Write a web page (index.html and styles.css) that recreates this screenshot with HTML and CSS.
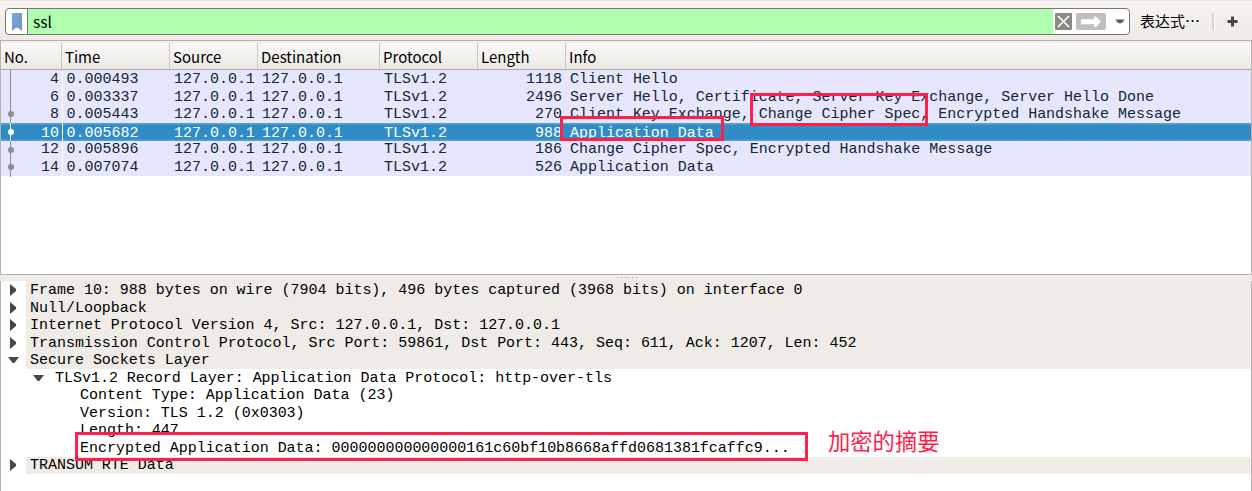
FILE: index.html
```html
<!DOCTYPE html>
<html lang="zh-CN">
<head>
<meta charset="utf-8">
<title>ssl</title>
<link rel="stylesheet" href="styles.css">
</head>
<body>
<div class="toolbar">
  <div class="filter">
    <span class="bookmark"><svg width="12" height="20" viewBox="0 0 12 20"><defs><linearGradient id="b" x2="1" y2="1"><stop stop-color="#7ca5d7"/><stop offset="1" stop-color="#6d96c9"/></linearGradient></defs><path d="M1 1h10v17H9q-.5-2.500-3-2.500T3 18H1z" fill="url(#b)"/></svg></span>
    <span class="query">ssl</span>
    <svg class="clear" width="17" height="17" viewBox="0 0 17 17"><rect width="17" height="17" rx="1" fill="#888a85"/><path d="M3 3l11 11M14 3L3 14" stroke="#fff" stroke-width="1.700"/></svg>
    <svg class="apply" width="30" height="17" viewBox="0 0 30 17"><rect width="30" height="17" rx="2" fill="#c1bebb"/><path d="M5 6.200H18V3.500h2l5 5.200-5 5.200h-2v-2.700H5z" fill="#fff"/></svg>
    <svg class="drop" width="10" height="5" viewBox="0 0 10 5"><path d="M.5.5h9v.6L6.500 4.200h-3L.5 1.100z" fill="#5b5b58"/></svg>
  </div>
  <span class="expr">表达式…</span>
  <span class="divider"></span>
  <svg class="plus" width="11" height="11" viewBox="0 0 11 11"><path d="M4 .5h3V4h3.500v3H7v3.500H4V7H.5V4H4z" fill="#464744"/></svg>
</div>
<div class="packets">
  <div class="cols head"><span>No.</span><span>Time</span><span>Source</span><span>Destination</span><span>Protocol</span><span>Length</span><span>Info</span></div>
  <div class="cols row"><span class="num"><i class="line"></i>4</span><span>0.000493</span><span>127.0.0.1</span><span>127.0.0.1</span><span>TLSv1.2</span><span class="num">1118</span><span>Client Hello</span></div>
  <div class="cols row short"><span class="num"><i class="line"></i>6</span><span>0.003337</span><span>127.0.0.1</span><span>127.0.0.1</span><span>TLSv1.2</span><span class="num">2496</span><span>Server Hello, Certificate, Server Key Exchange, Server Hello Done</span></div>
  <div class="cols row"><span class="num"><i class="line dot"></i>8</span><span>0.005443</span><span>127.0.0.1</span><span>127.0.0.1</span><span>TLSv1.2</span><span class="num">270</span><span>Client Key Exchange, Change Cipher Spec, Encrypted Handshake Message</span></div>
  <div class="cols row selected"><span class="num"><i class="line dot"></i>10</span><span>0.005682</span><span>127.0.0.1</span><span>127.0.0.1</span><span>TLSv1.2</span><span class="num">988</span><span>Application Data</span></div>
  <div class="cols row short raised"><span class="num"><i class="line dot"></i>12</span><span>0.005896</span><span>127.0.0.1</span><span>127.0.0.1</span><span>TLSv1.2</span><span class="num">186</span><span>Change Cipher Spec, Encrypted Handshake Message</span></div>
  <div class="cols row"><span class="num"><i class="line dot"></i>14</span><span>0.007074</span><span>127.0.0.1</span><span>127.0.0.1</span><span>TLSv1.2</span><span class="num">526</span><span>Application Data</span></div>
</div>
<div class="splitter"><i></i><i></i><i></i><i></i><i></i><i></i></div>
<div class="details">
  <div class="node top"><b class="closed"></b><span>Frame 10: 988 bytes on wire (7904 bits), 496 bytes captured (3968 bits) on interface 0</span></div>
  <div class="node top"><b class="closed"></b><span>Null/Loopback</span></div>
  <div class="node top"><b class="closed"></b><span>Internet Protocol Version 4, Src: 127.0.0.1, Dst: 127.0.0.1</span></div>
  <div class="node top"><b class="closed"></b><span>Transmission Control Protocol, Src Port: 59861, Dst Port: 443, Seq: 611, Ack: 1207, Len: 452</span></div>
  <div class="node top"><b class="open"></b><span>Secure Sockets Layer</span></div>
  <div class="node child"><b class="open"></b><span>TLSv1.2 Record Layer: Application Data Protocol: http-over-tls</span></div>
  <div class="node leaf"><span>Content Type: Application Data (23)</span></div>
  <div class="node leaf"><span>Version: TLS 1.2 (0x0303)</span></div>
  <div class="node leaf"><span>Length: 447</span></div>
  <div class="node leaf"><span>Encrypted Application Data: 000000000000000161c60bf10b8668affd0681381fcaffc9...</span></div>
  <div class="node top last"><b class="closed"></b><span>TRANSUM RTE Data</span></div>
</div>
<div class="mark mark-cipher"></div>
<div class="mark mark-data"></div>
<div class="mark mark-digest"></div>
<div class="note">加密的摘要</div>
</body>
</html>
```
FILE: styles.css
```css
* { box-sizing: border-box; }
body {
  margin: 0;
  width: 1252px;
  height: 491px;
  overflow: hidden;
  position: relative;
  display: flex;
  flex-direction: column;
  background: #efebe7;
  color: #000;
  font: 15px/18px "Liberation Mono", monospace;
}
svg { display: block; flex: none; }

/* filter toolbar */
.toolbar {
  height: 41px;
  flex: none;
  display: flex;
  align-items: center;
  padding: 1px 0 0 5px;
  border-top: 1px solid #e9e5e1;
  border-bottom: 1px solid #b6b2ae;
  background: linear-gradient(#f7f4f1, #eeebe7);
  font: 15px/20px "Noto Sans CJK SC", sans-serif;
}
.filter {
  width: 1125px;
  height: 27px;
  display: flex;
  align-items: center;
  border: 1px solid #777672;
  border-radius: 4px;
  background: #fff;
  overflow: hidden;
}
.bookmark { width: 22px; height: 25px; padding: 3px 0 0 5px; border-right: 1px solid #777672; }
.query { width: 1025px; height: 25px; padding: 2px 5px 0; background: #afffaf; font-size: 15.500px; line-height: 20px; }
.clear { margin-left: 2px; }
.apply { margin-left: 4px; }
.drop { margin-left: 9px; }
.expr { width: 60px; margin-left: 10px; white-space: nowrap; }
.divider { width: 3px; height: 17px; margin-left: 12px; background: linear-gradient(90deg, #d4d1ce 2px, #fff 2px); }
.plus { margin-left: 12px; }

/* packet list */
.packets {
  height: 234px;
  flex: none;
  padding-top: 2px;
  border: solid #b6b2ae;
  border-width: 0 1px 1px;
  background: linear-gradient(#f1eeeb 2px, #fff 2px);
}
.cols { display: grid; grid-template-columns: 61px 108px 88px 122px 98px 88px 1fr; white-space: pre; }
.head {
  height: 27px;
  border-bottom: 1px solid #aca79f;
  background: linear-gradient(#fbf9f7, #ebe9e5);
  font: 15px/28px "Noto Sans CJK SC", sans-serif;
}
.head span { padding-left: 3px; border-right: 1px solid #cbc7c3; }
.head span:last-child { border: 0; }
.row {
  height: 18px;
  background: #e6e6ff;
  color: #12272e;
  letter-spacing: -.018px;
}
.row span { position: relative; padding-left: 4px; line-height: 19px; }
.row span:first-child { width: 62px; border-right: 1px solid #fff; padding-right: 3px; }
.row span:nth-child(2) { padding-left: 4.500px; }
.row .num { text-align: right; padding-right: 4px; }
.short { height: 17px; }
.selected { background: linear-gradient(#56a3d3 1px, #308cc6 2px 16px, #4f9fd1 17px); color: #fff; }
.selected span { line-height: 21px; }
.raised span { line-height: 17px; }
.line { position: absolute; left: 9px; top: 0; width: 1px; height: 100%; background: #888f94; }
.dot::after {
  content: "";
  position: absolute;
  left: -2.500px;
  top: 6px;
  width: 6px;
  height: 6px;
  border-radius: 50%;
  background: inherit;
}
.selected .line { background: #fff; }

/* packet details */
.splitter { height: 6px; flex: none; display: flex; justify-content: center; gap: 2.800px; padding: 2px 0 0 2px; }
.splitter i { width: 1px; height: 1px; background: #aaa6a2; }
.details {
  flex: 1;
  display: grid;
  grid-template-rows: 18px 17px 18px 17px 18px 17px 18px 17px 18px 18px 17px;
  border: solid #b6b2ae;
  border-width: 0 1px;
  background: #fff;
  letter-spacing: -.018px;
}
.node { display: flex; white-space: pre; line-height: 19px; height: 100%; min-height: 0; }
.top span { flex: 1; padding-left: 4px; background: #efebe7; }
.top b { width: 25px; }
.child { padding-left: 25px; }
.child b { width: 29px; }
.leaf { padding-left: 79px; }
.last span { line-height: 17px; }
.closed::before, .open::before { content: ""; display: block; background: #464744; }
.closed::before { width: 6px; height: 12px; margin: 3px 0 0 9px; clip-path: polygon(0 0, 100% 42%, 100% 58%, 0 100%); }
.open::before { width: 11px; height: 6px; margin: 6px 0 0 7px; clip-path: polygon(0 0, 100% 0, 58% 100%, 42% 100%); }
.last .closed::before { margin-top: 2px; }

/* annotations over the window */
.mark { position: absolute; border: 3px solid #ff1e4c; }
.mark-cipher { left: 750px; top: 93px; width: 178px; height: 33px; }
.mark-data { left: 560px; top: 116px; width: 164px; height: 25px; }
.mark-digest { left: 75px; top: 432px; width: 733px; height: 29px; }
.note {
  position: absolute;
  left: 828px;
  top: 424px;
  color: #ff1e4c;
  font: 22.300px/32px "Noto Sans CJK SC", sans-serif;
}
```
